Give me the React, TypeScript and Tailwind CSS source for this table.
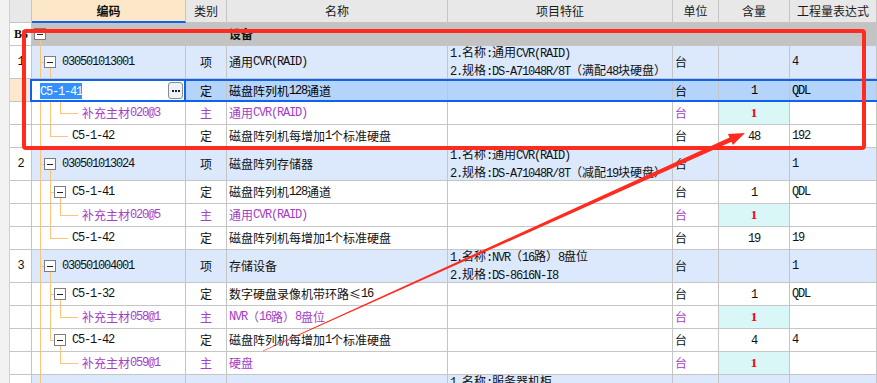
import React from "react";

const LINE = "#ffc47a";

type Tree = {
  guides: number[];
  elbow?: { x: number; last: boolean; to: number };
  box?: number;
  down?: number;
};

type Kind = "group" | "item" | "sel" | "def" | "main";

type R = {
  kind: Kind;
  h: 23 | 33;
  num?: string;
  tree?: Tree;
  tx: number;
  code: string;
  type: string;
  name: string;
  feat?: string[];
  unit: string;
  qty: string;
  expr: string;
};

function Tx({ s }: { s: string }) {
  const parts = s.split(/([\x20-\x7e]+)/);
  return (
    <>
      {parts.map((p, i) =>
        p === "" ? null : /^[\x20-\x7e]+$/.test(p) ? (
          <span key={i} className="font-['Liberation_Mono',monospace] tracking-[-1.2px]">
            {p}
          </span>
        ) : (
          <span key={i}>{p}</span>
        )
      )}
    </>
  );
}

function TreeSvg({ w, h, t }: { w: number; h: number; t: Tree }) {
  const H = h - 1;
  const mid = Math.floor(H / 2);
  const lines: React.ReactNode[] = [];
  t.guides.forEach((x) =>
    lines.push(<line key={"g" + x} x1={x + 0.5} y1={0} x2={x + 0.5} y2={H + 1} stroke={LINE} />)
  );
  if (t.elbow) {
    const e = t.elbow;
    lines.push(
      <line key="ev" x1={e.x + 0.5} y1={0} x2={e.x + 0.5} y2={e.last ? mid + 0.5 : H + 1} stroke={LINE} />
    );
    lines.push(<line key="eh" x1={e.x} y1={mid + 0.5} x2={e.to} y2={mid + 0.5} stroke={LINE} />);
  }
  if (t.down !== undefined) {
    lines.push(
      <line key="dn" x1={t.down + 0.5} y1={mid + 6} x2={t.down + 0.5} y2={H + 1} stroke={LINE} />
    );
  }
  if (t.box !== undefined) {
    const b = t.box;
    lines.push(
      <g key="box">
        <rect x={b + 0.5} y={mid - 5.5} width={11} height={11} fill="#ffffff" stroke="#7c7c7c" />
        <line x1={b + 3} y1={mid + 0.5} x2={b + 9} y2={mid + 0.5} stroke="#222" />
      </g>
    );
  }
  return (
    <svg width={w} height={H} className="shrink-0 self-start overflow-visible">
      {lines}
    </svg>
  );
}

const C = "shrink-0 border-r border-b border-[#c5c5c5] flex items-center overflow-hidden whitespace-nowrap";

const rows: R[] = [
  { kind: "group", h: 23, num: "B3", tree: { guides: [], box: 2, down: 8 }, tx: 20, code: "", type: "", name: "设备", unit: "", qty: "", expr: "" },
  {
    kind: "item", h: 33, num: "1", tree: { guides: [8], elbow: { x: 8, last: false, to: 12 }, box: 12, down: 18 }, tx: 30,
    code: "030501013001", type: "项", name: "通用CVR(RAID)",
    feat: ["1.名称:通用CVR(RAID)", "2.规格:DS-A71048R/8T（满配48块硬盘）"], unit: "台", qty: "", expr: "4",
  },
  { kind: "sel", h: 23, tx: 0, code: "C5-1-41", type: "定", name: "磁盘阵列机128通道", unit: "台", qty: "1", expr: "QDL" },
  { kind: "main", h: 23, tree: { guides: [8, 18], elbow: { x: 28, last: true, to: 46 } }, tx: 50, code: "补充主材020@3", type: "主", name: "通用CVR(RAID)", unit: "台", qty: "1", expr: "" },
  { kind: "def", h: 23, tree: { guides: [8], elbow: { x: 18, last: true, to: 36 } }, tx: 40, code: "C5-1-42", type: "定", name: "磁盘阵列机每增加1个标准硬盘", unit: "台", qty: "48", expr: "192" },
  {
    kind: "item", h: 33, num: "2", tree: { guides: [8], elbow: { x: 8, last: false, to: 12 }, box: 12, down: 18 }, tx: 30,
    code: "030501013024", type: "项", name: "磁盘阵列存储器",
    feat: ["1.名称:通用CVR(RAID)", "2.规格:DS-A71048R/8T（减配19块硬盘）"], unit: "台", qty: "", expr: "1",
  },
  { kind: "def", h: 23, tree: { guides: [8, 18], elbow: { x: 18, last: false, to: 22 }, box: 22, down: 28 }, tx: 40, code: "C5-1-41", type: "定", name: "磁盘阵列机128通道", unit: "台", qty: "1", expr: "QDL" },
  { kind: "main", h: 23, tree: { guides: [8, 18], elbow: { x: 28, last: true, to: 46 } }, tx: 50, code: "补充主材020@5", type: "主", name: "通用CVR(RAID)", unit: "台", qty: "1", expr: "" },
  { kind: "def", h: 23, tree: { guides: [8], elbow: { x: 18, last: true, to: 36 } }, tx: 40, code: "C5-1-42", type: "定", name: "磁盘阵列机每增加1个标准硬盘", unit: "台", qty: "19", expr: "19" },
  {
    kind: "item", h: 33, num: "3", tree: { guides: [8], elbow: { x: 8, last: false, to: 12 }, box: 12, down: 18 }, tx: 30,
    code: "030501004001", type: "项", name: "存储设备",
    feat: ["1.名称:NVR（16路）8盘位", "2.规格:DS-8616N-I8"], unit: "台", qty: "", expr: "1",
  },
  { kind: "def", h: 23, tree: { guides: [8, 18], elbow: { x: 18, last: false, to: 22 }, box: 22, down: 28 }, tx: 40, code: "C5-1-32", type: "定", name: "数字硬盘录像机带环路≤16", unit: "台", qty: "1", expr: "QDL" },
  { kind: "main", h: 23, tree: { guides: [8, 18], elbow: { x: 28, last: true, to: 46 } }, tx: 50, code: "补充主材058@1", type: "主", name: "NVR（16路）8盘位", unit: "台", qty: "1", expr: "" },
  { kind: "def", h: 23, tree: { guides: [8], elbow: { x: 18, last: true, to: 22 }, box: 22, down: 28 }, tx: 40, code: "C5-1-42", type: "定", name: "磁盘阵列机每增加1个标准硬盘", unit: "台", qty: "4", expr: "4" },
  { kind: "main", h: 23, tree: { guides: [8], elbow: { x: 28, last: true, to: 46 } }, tx: 50, code: "补充主材059@1", type: "主", name: "硬盘", unit: "台", qty: "1", expr: "" },
  {
    kind: "item", h: 33, num: "4", tree: { guides: [8], elbow: { x: 8, last: false, to: 12 }, box: 12, down: 18 }, tx: 30,
    code: "030501012001", type: "项", name: "服务器机柜",
    feat: ["1.名称:服务器机柜", "2.规格:42U"], unit: "台", qty: "", expr: "1",
  },
];

function SelRow({ r }: { r: R }) {
  const SC = "shrink-0 h-full border-r border-[#c5c5c5] bg-[#b4d4fb] flex items-center overflow-hidden whitespace-nowrap";
  return (
    <div className="flex h-[23px] shrink-0">
      <div className="w-[20px] shrink-0 border-b border-[#c5c5c5] bg-[#fde8cf]" />
      <div className="flex h-[23px] border-y-2 border-[#0d62ef]">
        <div className="w-[156px] shrink-0 h-full border-x-2 border-[#0d62ef] bg-white flex items-center justify-between pl-[8px] pr-[1px]">
          <span className="bg-[#3390ff] text-white leading-[14px]">
            <Tx s={r.code} />
          </span>
          <div className="w-[15px] h-[17px] rounded-[3px] border border-[#8c8c8c] bg-[#eef1f7] flex items-center justify-center gap-[1px]">
            <span className="w-[2px] h-[2px] bg-[#222]" />
            <span className="w-[2px] h-[2px] bg-[#222]" />
            <span className="w-[2px] h-[2px] bg-[#222]" />
          </div>
        </div>
        <div className={`${SC} w-[41px] justify-center`}>{r.type}</div>
        <div className={`${SC} w-[221px] pl-[2px]`}>
          <Tx s={r.name} />
        </div>
        <div className={`${SC} w-[225px]`} />
        <div className={`${SC} w-[46px] pl-[2px]`}>{r.unit}</div>
        <div className={`${SC} w-[71px] justify-center`}>
          <Tx s={r.qty} />
        </div>
        <div className={`${SC} w-[87px] pl-[2px]`}>
          <Tx s={r.expr} />
        </div>
      </div>
    </div>
  );
}

function Row({ r }: { r: R }) {
  if (r.kind === "sel") return <SelRow r={r} />;
  const main = r.kind === "main";
  const tc = main ? "text-[#a43ec6]" : "text-[#111111]";
  const bg = r.kind === "group" ? "bg-[#c3c3c3]" : r.kind === "item" ? "bg-[#dce8fc]" : "bg-white";
  const hc = r.h === 33 ? "h-[33px]" : "h-[23px]";
  return (
    <div className={`flex shrink-0 ${hc}`}>
      <div className={`${C} w-[22px] bg-white justify-center text-[#111111]`}>
        {r.kind === "group" ? (
          <span className="font-['Liberation_Serif',serif] font-bold pl-[1px]">{r.num}</span>
        ) : (
          r.num && <Tx s={r.num} />
        )}
      </div>
      <div className={`${C} w-[154px] ${bg} ${tc}`}>
        {r.tree && <TreeSvg w={r.tx} h={r.h} t={r.tree} />}
        <Tx s={r.code} />
      </div>
      <div className={`${C} w-[41px] ${bg} ${tc} justify-center`}>{r.type}</div>
      <div className={`${C} w-[221px] ${bg} ${tc} pl-[2px] ${r.kind === "group" ? "font-bold" : ""}`}>
        <Tx s={r.name} />
      </div>
      <div className={`${C} w-[225px] ${bg} text-[#111111] pl-[2px] flex-col !items-start justify-center leading-[16px]`}>
        {r.feat?.map((f, i) => (
          <div key={i}>
            <Tx s={f} />
          </div>
        ))}
      </div>
      <div className={`${C} w-[46px] ${bg} ${tc} pl-[2px]`}>{r.unit}</div>
      <div className={`${C} w-[71px] ${main ? "bg-[#d9f7f6]" : bg} justify-center`}>
        {main ? (
          <span className="font-['Liberation_Serif',serif] font-bold text-[#ff0000] text-[13px]">{r.qty}</span>
        ) : (
          <span className="text-[#111111]">
            <Tx s={r.qty} />
          </span>
        )}
      </div>
      <div className={`${C} w-[87px] ${bg} text-[#111111] pl-[2px]`}>
        <Tx s={r.expr} />
      </div>
    </div>
  );
}

function Header() {
  const H = "shrink-0 border-r border-b border-[#c5c5c5] bg-[#e8e8e8] flex items-center justify-center text-[#1a1a1a]";
  return (
    <div className="flex h-[23px] shrink-0">
      <div className={`${H} w-[22px]`} />
      <div className="shrink-0 w-[154px] border-r border-[#c5c5c5] border-b-2 border-b-[#0d62ef] bg-[#fde7c9] flex items-center justify-center font-bold text-[#111111]">
        编码
      </div>
      <div className={`${H} w-[41px]`}>类别</div>
      <div className={`${H} w-[221px]`}>名称</div>
      <div className={`${H} w-[225px]`}>项目特征</div>
      <div className={`${H} w-[46px]`}>单位</div>
      <div className={`${H} w-[71px]`}>含量</div>
      <div className={`${H} w-[87px]`}>工程量表达式</div>
    </div>
  );
}

export default function App() {
  return (
    <div className="relative w-[877px] h-[383px] overflow-hidden bg-white font-['Noto_Sans_CJK_SC',sans-serif] text-[12px] leading-[14px]">
      <div className="flex h-full">
        <div className="w-[10px] shrink-0 h-full bg-[#f2f2f2] border-r border-[#d0d0d0]" />
        <div className="flex flex-col">
          <Header />
          {rows.map((r, i) => (
            <Row key={i} r={r} />
          ))}
        </div>
      </div>
      <div className="absolute left-[22px] top-[29px] w-[844px] h-[121px] border-[4px] border-[#ff2b1e] rounded-[4px] pointer-events-none" />
      <svg className="absolute left-0 top-0 pointer-events-none" width={877} height={383}>
        <polygon points="262.88,350.73 731.25,136.7 733.15,140.9 263.12,351.27" fill="#ff2b1e" />
        <polygon points="745,133 732.9,145.1 727.9,134.1" fill="#ff2b1e" />
      </svg>
    </div>
  );
}
